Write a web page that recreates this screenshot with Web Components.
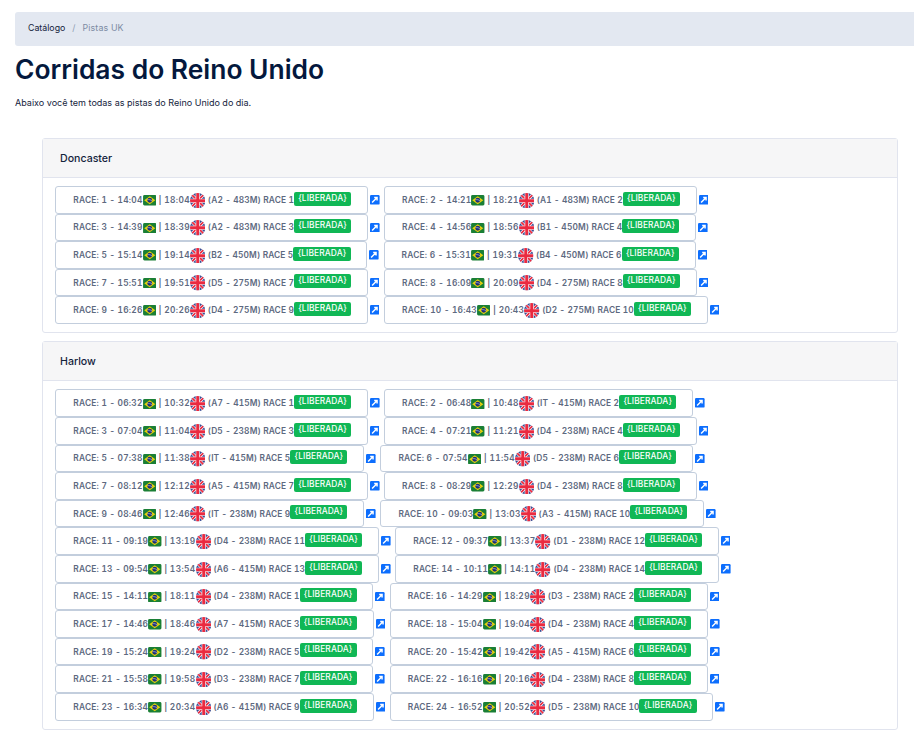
<!DOCTYPE html>
<html lang="pt-BR">
<head>
<meta charset="utf-8">
<title>Pistas UK</title>
<style>
  html, body { margin: 0; background: #fff; }
  body { font-family: "Inter", "Liberation Sans", sans-serif; color: #0a2240; }
</style>
</head>
<body>
<page-shell>
  <bread-crumb first="Catálogo" second="Pistas UK"></bread-crumb>
  <h1 slot="title">Corridas do Reino Unido</h1>
  <span slot="lead">Abaixo você tem todas as pistas do Reino Unido do dia.</span>
  <race-card slot="cards" name="Doncaster" races="1 14:04 18:04 A2 483M 1|2 14:21 18:21 A1 483M 2|3 14:39 18:39 A2 483M 3|4 14:56 18:56 B1 450M 4|5 15:14 19:14 B2 450M 5|6 15:31 19:31 B4 450M 6|7 15:51 19:51 D5 275M 7|8 16:09 20:09 D4 275M 8|9 16:26 20:26 D4 275M 9|10 16:43 20:43 D2 275M 10"></race-card>
  <race-card slot="cards" name="Harlow" races="1 06:32 10:32 A7 415M 1|2 06:48 10:48 IT 415M 2|3 07:04 11:04 D5 238M 3|4 07:21 11:21 D4 238M 4|5 07:38 11:38 IT 415M 5|6 07:54 11:54 D5 238M 6|7 08:12 12:12 A5 415M 7|8 08:29 12:29 D4 238M 8|9 08:46 12:46 IT 238M 9|10 09:03 13:03 A3 415M 10|11 09:19 13:19 D4 238M 11|12 09:37 13:37 D1 238M 12|13 09:54 13:54 A6 415M 13|14 10:11 14:11 D4 238M 14|15 14:11 18:11 D4 238M 1|16 14:29 18:29 D3 238M 2|17 14:46 18:46 A7 415M 3|18 15:04 19:04 D4 238M 4|19 15:24 19:24 D2 238M 5|20 15:42 19:42 A5 415M 6|21 15:58 19:58 D3 238M 7|22 16:16 20:16 D4 238M 8|23 16:34 20:34 A6 415M 9|24 16:52 20:52 D5 238M 10"></race-card>
</page-shell>

<script>
const shellTemplate = document.createElement('template');
shellTemplate.innerHTML = `
  <style>
    :host { display: block; padding: 12px 0 0 15px; }
    .title { margin-top: 6px; }
    .title ::slotted(h1) { margin: 0; font-size: 26.4px; line-height: 34px; font-weight: 600; color: #04183d; }
    .lead { margin: 9.5px 0 0; font-size: 9.03px; line-height: 14px; color: #14233c; }
    .cards { margin: 28.5px 16px 0 27px; display: flex; flex-direction: column; gap: 8px; }
  </style>
  <slot></slot>
  <div class="title"><slot name="title"></slot></div>
  <p class="lead"><slot name="lead"></slot></p>
  <div class="cards"><slot name="cards"></slot></div>
`;

class PageShell extends HTMLElement {
  constructor() {
    super();
    this.attachShadow({ mode: 'open' });
    this.shadowRoot.appendChild(shellTemplate.content.cloneNode(true));
  }
}

class BreadCrumb extends HTMLElement {
  constructor() {
    super();
    this.attachShadow({ mode: 'open' });
  }

  connectedCallback() {
    this.shadowRoot.innerHTML = `
      <style>
        :host { display: flex; align-items: center; height: 34px; padding: 0 0 3px 13px; box-sizing: border-box; background: #e3e8f1; border-radius: 3px 0 0 3px; font-size: 8.8px; color: #14233c; }
        .sep { margin: 0 7px; color: #8f9db3; }
        .active { color: #7c8ba3; letter-spacing: .15px; }
      </style>
      <span>${this.getAttribute('first')}</span><span class="sep">/</span><span class="active">${this.getAttribute('second')}</span>
    `;
  }
}

class RaceCard extends HTMLElement {
  constructor() {
    super();
    this.attachShadow({ mode: 'open' });
  }

  connectedCallback() {
    const items = this.getAttribute('races').split('|').map((race) => {
      const [num, br, uk, track, dist, label] = race.split(' ');
      return `<race-item num="${num}" br="${br}" uk="${uk}" track="${track}" dist="${dist}" label="${label}"></race-item>`;
    }).join('');
    this.shadowRoot.innerHTML = `
      <style>
        :host { display: block; border: 1px solid #e1e4ee; border-radius: 3px; background: #fff; }
        .head { box-sizing: border-box; height: 38.5px; display: flex; align-items: center; padding: 1px 0 0 17px; background: #f6f6f7; border-bottom: 1px solid #e1e4ee; font-size: 10.6px; font-weight: 500; color: #14233c; }
        .body { display: flex; flex-wrap: wrap; padding: 8.5px 12.3px 8.5px; }
      </style>
      <div class="head">${this.getAttribute('name')}</div>
      <div class="body">${items}</div>
    `;
  }
}

const raceTemplate = document.createElement('template');
raceTemplate.innerHTML = `
  <style>
    :host { display: flex; align-items: center; height: 27.6px; margin-right: 4.6px; }
    .btn { box-sizing: border-box; height: 27.6px; display: flex; align-items: center; padding: 0 15.8px 0 17px; border: 1px solid #c3cedd; border-bottom-width: 1.5px; border-radius: 3px; font-size: 8.4px; font-weight: 600; color: #5d6980; white-space: nowrap; font-variant-numeric: tabular-nums; letter-spacing: .2px; }
    .pipe { margin: 0 2.5px 0 2.5px; }
    .end { letter-spacing: .35px; }
    .track { margin-left: 2.5px; letter-spacing: .1px; }
    .br { width: 13.5px; height: 10.5px; margin-top: 1px; display: block; }
    .uk { width: 15.4px; height: 15.4px; margin-top: 1px; display: block; }
    .badge { margin: -2.5px 0 0 0; height: 14px; line-height: 13px; padding: 0 4.5px; border-radius: 2px; background: #10b755; color: #fff; font-weight: 500; letter-spacing: .1px; }
    .link { width: 9.6px; height: 9.6px; margin-left: 2px; display: block; }
  </style>
  <span class="btn">
    <span class="start"></span>
    <svg class="br" viewBox="0 0 14 11"><rect width="14" height="11" rx="1.5" fill="#1a7f35"/><path d="M7 1.2 12.8 5.500 7 9.800 1.200 5.500Z" fill="#e8d20c"/><circle cx="7" cy="5.500" r="2.500" fill="#1c2f7a"/><path d="M4.700 5c1.500-.4 3.200 0 4.600 1" stroke="#fff" stroke-width=".5" fill="none"/></svg>
    <span class="pipe">|</span>
    <span class="end"></span>
    <svg class="uk" viewBox="0 0 16 16"><defs><clipPath id="c"><circle cx="8" cy="8" r="8"/></clipPath></defs><g clip-path="url(#c)"><rect width="16" height="16" fill="#3a4c92"/><path d="M0 0 16 16M16 0 0 16" stroke="#fff" stroke-width="3"/><path d="M0 0 16 16M16 0 0 16" stroke="#ea2a40" stroke-width="1.800"/><path d="M8 0V16M0 8H16" stroke="#fff" stroke-width="4.200"/><path d="M8 0V16M0 8H16" stroke="#ea2a40" stroke-width="3"/></g></svg>
    <span class="track"></span>
    <span class="badge">{LIBERADA}</span>
  </span>
  <svg class="link" viewBox="0 0 16 16"><path fill="#0d6efd" d="M14 0a2 2 0 0 1 2 2v12a2 2 0 0 1-2 2H2a2 2 0 0 1-2-2V2a2 2 0 0 1 2-2h12z"/><path fill="none" stroke="#fff" stroke-width="2.400" d="M3.500 12.500 11 5M7 4.200H11.800V9"/></svg>
`;

class RaceItem extends HTMLElement {
  constructor() {
    super();
    this.attachShadow({ mode: 'open' });
    this.shadowRoot.appendChild(raceTemplate.content.cloneNode(true));
  }

  connectedCallback() {
    const a = (name) => this.getAttribute(name);
    this.shadowRoot.querySelector('.start').textContent = `RACE: ${a('num')} - ${a('br')}`;
    this.shadowRoot.querySelector('.end').textContent = a('uk');
    this.shadowRoot.querySelector('.track').textContent = `(${a('track')} - ${a('dist')}) RACE ${a('label')}`;
  }
}

customElements.define('page-shell', PageShell);
customElements.define('bread-crumb', BreadCrumb);
customElements.define('race-card', RaceCard);
customElements.define('race-item', RaceItem);
</script>
</body>
</html>
